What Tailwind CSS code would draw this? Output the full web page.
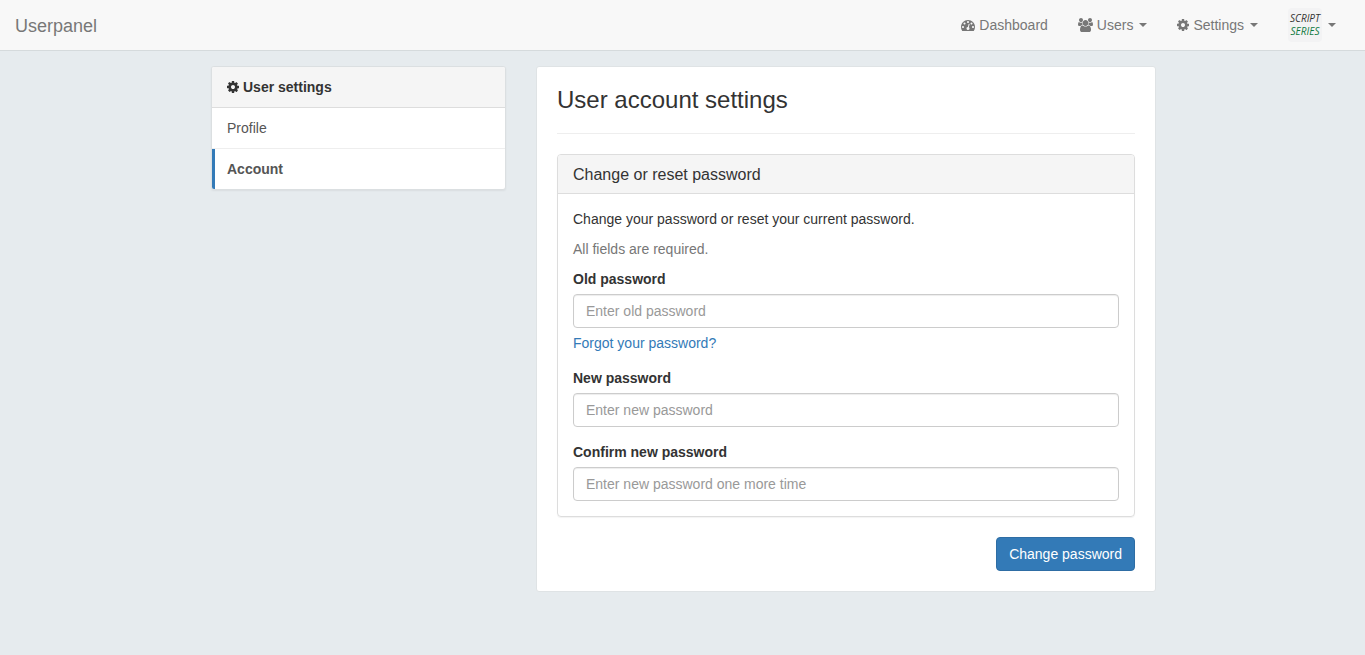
<!DOCTYPE html>
<html lang="en">
<head>
<meta charset="utf-8">
<meta name="viewport" content="width=device-width, initial-scale=1">
<title>Userpanel</title>
<script src="https://cdn.jsdelivr.net/npm/@tailwindcss/browser@4"></script>
</head>
<body class="min-h-screen bg-[#e6ebee] font-['Liberation_Sans',Arial,sans-serif] text-sm leading-5 text-[#333]">
<svg class="hidden" aria-hidden="true">
  <symbol id="cog" viewBox="128 128 1536 1536"><path d="M1152 896q0-106-75-181t-181-75-181 75-75 181 75 181 181 75 181-75 75-181zm512-109v222q0 12-8 23t-20 13l-185 28q-19 54-39 91 35 50 107 138 10 12 10 25t-9 23q-27 37-99 108t-94 71q-12 0-26-9l-138-108q-44 23-91 38-16 136-29 186-7 28-36 28h-222q-14 0-24.5-8.5t-11.5-21.5l-28-184q-49-16-90-37l-141 107q-10 9-25 9-14 0-25-11-126-114-165-168-7-10-7-23 0-12 8-23 15-21 51-66.5t54-70.5q-27-50-41-99l-183-27q-13-2-21-12.5t-8-23.5v-222q0-12 8-23t19-13l186-28q14-46 39-92-40-57-107-138-10-12-10-24 0-10 9-23 26-36 98.5-107.5t94.5-71.5q13 0 26 10l138 107q44-23 91-38 16-136 29-186 7-28 36-28h222q14 0 24.5 8.5t11.5 21.5l28 184q49 16 90 37l142-107q9-9 24-9 13 0 25 10 129 119 165 170 7 8 7 22 0 12-8 23-15 21-51 66.5t-54 70.5q26 50 41 98l183 28q13 2 21 12.5t8 23.5z"/></symbol>
</svg>

<nav class="flex h-[51px] items-center justify-between border-b border-[#d5dadc] bg-[#f8f8f8] pr-[29px] pl-[15px] text-[#777]">
  <a href="#" class="pt-0.5 text-lg leading-5">Userpanel</a>
  <div class="flex items-center gap-[30px]">
    <a href="#" class="flex items-center gap-1">
      <svg class="size-3.5" viewBox="0 0 1792 1792" fill="currentColor" aria-hidden="true"><path d="M384 1152q0-53-37.5-90.5t-90.5-37.5-90.5 37.5-37.5 90.5 37.5 90.5 90.5 37.5 90.5-37.5 37.5-90.5zm192-448q0-53-37.5-90.5t-90.5-37.5-90.5 37.5-37.5 90.5 37.5 90.5 90.5 37.5 90.5-37.5 37.5-90.5zm428 481l101-382q6-26-7.5-48.5t-38.5-29.5-48 6.5-30 39.5l-101 382q-60 5-107 43.5t-63 98.5q-20 77 20 146t117 89 146-20 89-117q16-60-6-117t-72-91zm660-33q0-53-37.5-90.5t-90.5-37.5-90.5 37.5-37.5 90.5 37.5 90.5 90.5 37.5 90.5-37.5 37.5-90.5zm-640-640q0-53-37.5-90.5t-90.5-37.5-90.5 37.5-37.5 90.5 37.5 90.5 90.5 37.5 90.5-37.5 37.5-90.5zm448 192q0-53-37.5-90.5t-90.5-37.5-90.5 37.5-37.5 90.5 37.5 90.5 90.5 37.5 90.5-37.5 37.5-90.5zm320 448q0 261-141 483-19 29-54 29h-1402q-35 0-54-29-141-221-141-483 0-182 71-348t191-286 286-191 348-71 348 71 286 191 191 286 71 348z"/></svg>
      Dashboard
    </a>
    <button type="button" class="flex items-center gap-1">
      <svg class="h-3.5 w-[15px]" viewBox="-64 0 1920 1792" fill="currentColor" aria-hidden="true"><path d="M529 896q-162 5-265 128h-134q-82 0-138-40.5t-56-118.5q0-353 124-353 6 0 43.5 21t97.5 42.5 119 21.5q67 0 133-23-5 37-5 66 0 139 81 256zm1071 637q0 120-73 189.5t-194 69.5h-874q-121 0-194-69.5t-73-189.5q0-53 3.5-103.5t14-109 26.5-108.5 43-97.5 62-81 85.5-53.5 111.5-20q10 0 43 21.5t73 48 107 48 135 21.5 135-21.5 107-48 73-48 43-21.5q61 0 111.5 20t85.5 53.5 62 81 43 97.5 26.5 108.5 14 109 3.5 103.5zm-1024-1277q0 106-75 181t-181 75-181-75-75-181 75-181 181-75 181 75 75 181zm704 384q0 159-112.5 271.5t-271.5 112.5-271.5-112.5-112.5-271.5 112.5-271.5 271.5-112.5 271.5 112.5 112.5 271.5zm576 225q0 78-56 118.5t-138 40.5h-134q-103-123-265-128 81-117 81-256 0-29-5-66 66 23 133 23 59 0 119-21.5t97.5-42.5 43.5-21q124 0 124 353zm-128-609q0 106-75 181t-181 75-181-75-75-181 75-181 181-75 181 75 75 181z"/></svg>
      Users
      <svg class="ml-0.5 h-1 w-2" viewBox="0 0 8 4" fill="currentColor" aria-hidden="true"><path d="M0 0h8L4 4z"/></svg>
    </button>
    <button type="button" class="flex items-center gap-1">
      <svg class="size-3" fill="currentColor" aria-hidden="true"><use href="#cog"/></svg>
      Settings
      <svg class="ml-0.5 h-1 w-2" viewBox="0 0 8 4" fill="currentColor" aria-hidden="true"><path d="M0 0h8L4 4z"/></svg>
    </button>
    <button type="button" class="flex items-center gap-1.5" aria-label="Account menu">
      <span class="flex size-[34px] flex-col items-center justify-center rounded bg-[#f3f3f4] font-['Open_Sans',sans-serif] text-[10px] leading-[13px] font-medium text-[#333] italic">
        <span>SCRIPT</span>
        <span class="text-[#0f7a42]">SERIES</span>
      </span>
      <svg class="h-1 w-2" viewBox="0 0 8 4" fill="currentColor" aria-hidden="true"><path d="M0 0h8L4 4z"/></svg>
    </button>
  </div>
</nav>

<div class="mx-auto mt-[15px] flex w-full max-w-[947px] items-start gap-[30px] pl-0.5">
  <aside class="w-[295px] shrink-0 overflow-hidden rounded-[3px] border border-[#dbdfe1] bg-white text-[#555] shadow-[0_1px_2px_rgba(0,0,0,0.06)]">
    <h2 class="flex items-center gap-1 border-b border-[#ddd] bg-[#f5f5f5] px-[15px] py-2.5 font-bold text-[#333]">
      <svg class="size-3" fill="currentColor" aria-hidden="true"><use href="#cog"/></svg>
      User settings
    </h2>
    <a href="#" class="block border-b border-[#eee] px-[15px] py-2.5">Profile</a>
    <a href="#" aria-current="page" class="block border-l-[3px] border-[#337ab7] py-2.5 pr-[15px] pl-3 font-bold">Account</a>
  </aside>

  <main class="min-w-0 grow rounded-[3px] border border-[#dfe3e5] bg-white p-5">
    <h1 class="border-b border-[#eee] pb-5 text-2xl leading-[26px]">User account settings</h1>
    <form>
      <section class="mt-5 rounded border border-[#ddd] shadow-[0_1px_1px_rgba(0,0,0,0.05)]">
        <h2 class="rounded-t-[3px] border-b border-[#ddd] bg-[#f5f5f5] px-[15px] pt-[11px] pb-[9px] text-base leading-[18px]">Change or reset password</h2>
        <div class="p-[15px]">
          <p>Change your password or reset your current password.</p>
          <p class="mt-2.5 text-[#777]">All fields are required.</p>
          <label for="old" class="mt-2.5 block font-bold">Old password</label>
          <input id="old" type="password" placeholder="Enter old password" class="mt-[5px] block h-[34px] w-full rounded border border-[#ccc] bg-white px-3 shadow-[inset_0_1px_1px_rgba(0,0,0,0.075)] placeholder:text-[#999]">
          <a href="#" class="mt-[5px] block text-[#337ab7]">Forgot your password?</a>
          <label for="new" class="mt-[15px] block font-bold">New password</label>
          <input id="new" type="password" placeholder="Enter new password" class="mt-[5px] block h-[34px] w-full rounded border border-[#ccc] bg-white px-3 shadow-[inset_0_1px_1px_rgba(0,0,0,0.075)] placeholder:text-[#999]">
          <label for="confirm" class="mt-[15px] block font-bold">Confirm new password</label>
          <input id="confirm" type="password" placeholder="Enter new password one more time" class="mt-[5px] block h-[34px] w-full rounded border border-[#ccc] bg-white px-3 shadow-[inset_0_1px_1px_rgba(0,0,0,0.075)] placeholder:text-[#999]">
        </div>
      </section>
      <div class="mt-5 flex justify-end">
        <button type="submit" class="h-[34px] rounded border border-[#2e6da4] bg-[#337ab7] px-3 text-white">Change password</button>
      </div>
    </form>
  </main>
</div>
</body>
</html>
